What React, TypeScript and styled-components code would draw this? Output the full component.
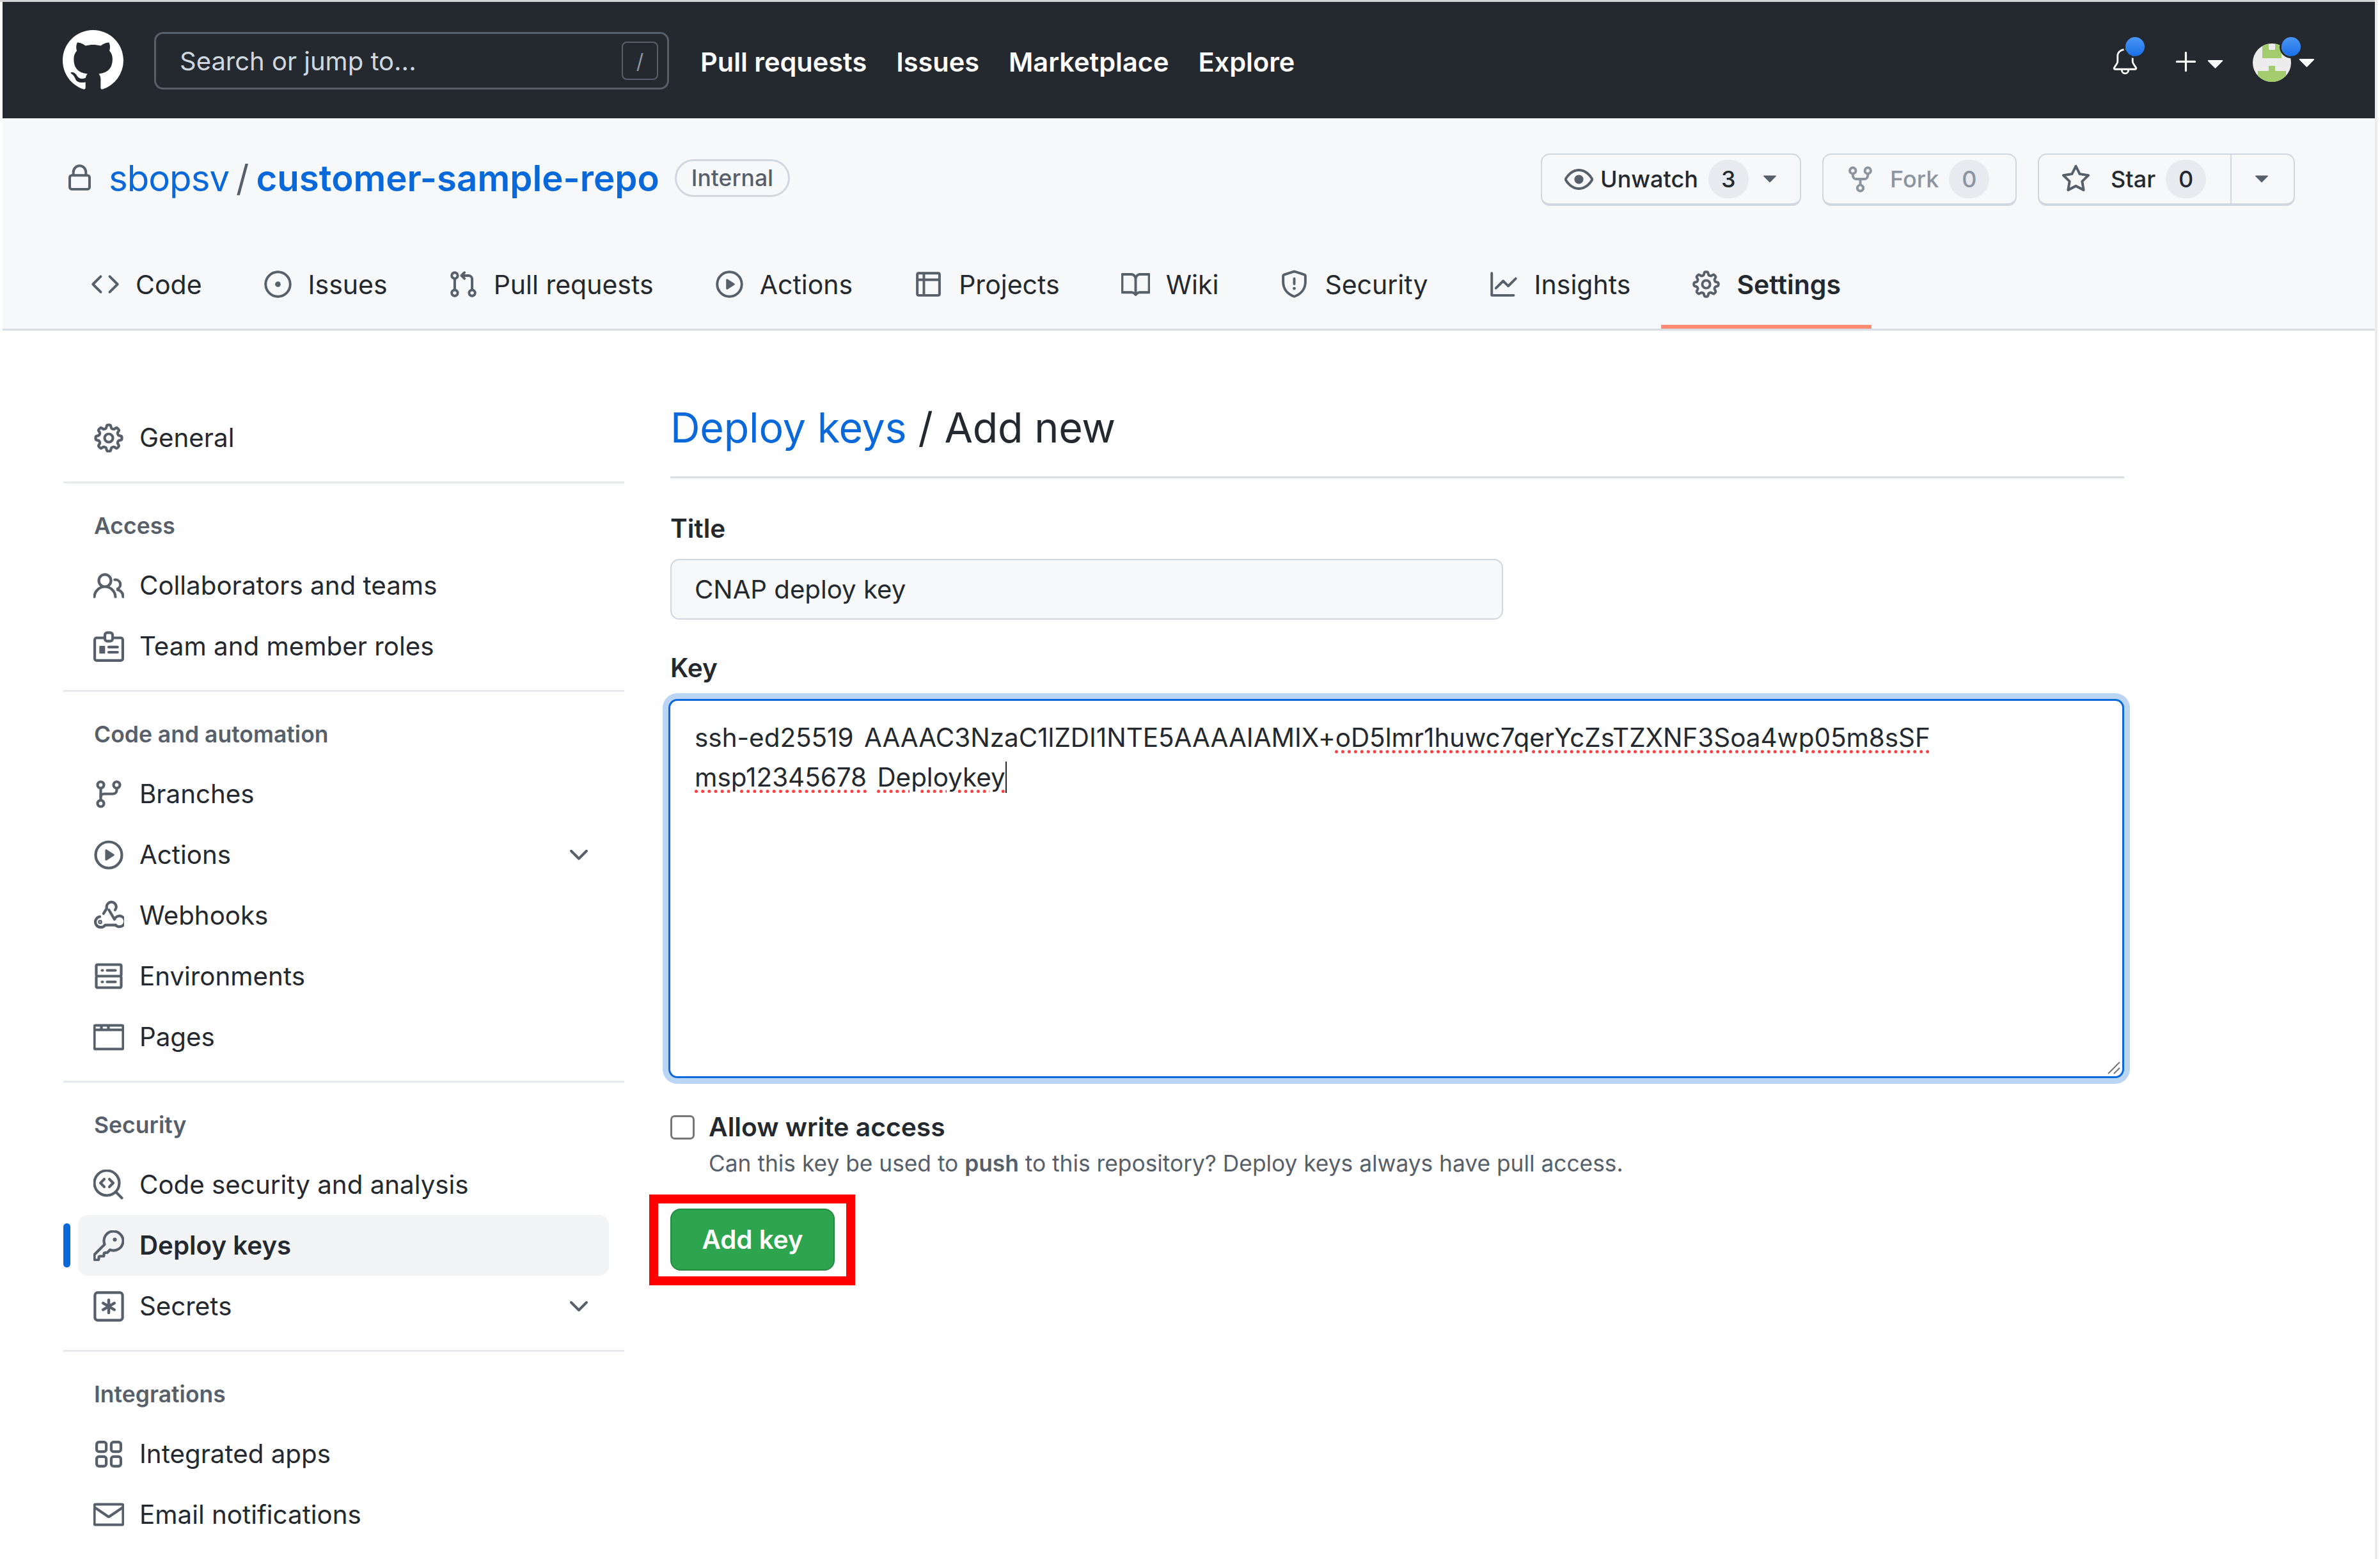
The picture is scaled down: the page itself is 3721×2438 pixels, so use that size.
import React from "react";
import styled, { createGlobalStyle, css } from "styled-components";
import {
  GoBell,
  GoBook,
  GoBrowser,
  GoChevronDown,
  GoCode,
  GoCodescan,
  GoEye,
  GoGear,
  GoGitBranch,
  GoGitPullRequest,
  GoGraph,
  GoIssueOpened,
  GoKey,
  GoLock,
  GoMail,
  GoPeople,
  GoPlay,
  GoPlus,
  GoRepoForked,
  GoServer,
  GoShield,
  GoStar,
  GoTable,
  GoTriangleDown,
} from "react-icons/go";

const GlobalStyle = createGlobalStyle`
  html, body {
    margin: 0;
    padding: 0;
    background: #fff;
    height: 2438px;
    overflow: hidden;
  }
  body {
    font-family: Inter, "Liberation Sans", sans-serif;
    color: #24292f;
  }
`;

// the package draws these on a 24 grid, a bit thin next to the reference
const heavyIcon = css`
  svg:not(.line) {
    stroke: currentColor;
    stroke-width: 0.6;
  }
`;

const Page = styled.div`
  width: 3717px;
  height: 2438px;
  box-sizing: border-box;
  margin-left: 0;
  padding: 3px 0 0 4px;
  border-right: 4px solid #ececec;
  position: relative;
  overflow: hidden;

  &::before {
    content: "";
    position: absolute;
    left: 0;
    right: 0;
    top: 0;
    height: 3px;
    background: #d4d4d4;
  }
`;

/* top bar */
const TopBar = styled.header`
  height: 182px;
  box-sizing: border-box;
  background: #24292f;
  display: flex;
  align-items: flex-start;
  padding: 44px 0 0 94px;
  color: #fff;
  position: relative;
`;

const Logo = styled.div`
  width: 95px;
  height: 95px;
  margin-right: 48px;
  color: #fff;
  display: flex;
`;

const Search = styled.div`
  width: 805px;
  height: 90px;
  box-sizing: border-box;
  margin-top: 3px;
  border: 3px solid #57606a;
  border-radius: 14px;
  display: flex;
  align-items: center;
  justify-content: space-between;
  padding: 0 14px 0 37px;
  font-size: 40px;
  color: #d0d7de;
  margin-right: 49px;
`;

const SlashKey = styled.span`
  width: 57px;
  height: 60px;
  box-sizing: border-box;
  border: 2px solid #57606a;
  border-radius: 8px;
  display: flex;
  align-items: center;
  justify-content: center;
  font-size: 32px;
  color: #8c959f;
`;

const TopNav = styled.nav`
  display: flex;
  gap: 46px;
  height: 100px;
  align-items: center;
  font-size: 41.5px;
  font-weight: 600;
  color: #fff;
`;

const TopRight = styled.div`
  position: absolute;
  top: 0;
  right: 0;
  left: 0;
  height: 100%;
  pointer-events: none;
`;

const TopIcon = styled.span<{ $x: number; $y: number; $size?: number }>`
  position: absolute;
  left: ${(p) => p.$x}px;
  top: ${(p) => p.$y}px;
  display: flex;
  color: #fff;
  font-size: ${(p) => p.$size ?? 45}px;
`;

const BlueDot = styled.span<{ $x: number }>`
  position: absolute;
  left: ${(p) => p.$x}px;
  top: 55px;
  width: 30px;
  height: 30px;
  border-radius: 50%;
  background: linear-gradient(#4a97f5, #1a6fe8);
  box-shadow: 0 0 0 3px #24292f;
`;

/* repo head */
const RepoHead = styled.div`
  height: 332px;
  background: #f6f8fa;
  border-bottom: 3px solid #d8dee4;
  box-sizing: border-box;
  display: flex;
  flex-direction: column;
`;

const RepoRow = styled.div`
  display: flex;
  align-items: center;
  justify-content: space-between;
  height: 82px;
  margin-top: 55px;
  padding: 0 125px 0 98px;
`;

const RepoTitle = styled.div`
  display: flex;
  align-items: center;
  font-size: 56.4px;
  color: #0969da;
  margin-top: -5px;
`;

const LockIcon = styled.span`
  ${heavyIcon}
  display: flex;
  color: #57606a;
  font-size: 45px;
  margin-right: 23px;
`;

const Owner = styled.span`
  letter-spacing: -1px;
`;

const Slash = styled.span`
  color: #57606a;
  margin: 0 11px;
`;

const RepoName = styled.span`
  font-weight: 600;
`;

const Badge = styled.span`
  margin-left: 24px;
  height: 59px;
  box-sizing: border-box;
  padding: 0 23px;
  display: flex;
  align-items: center;
  border: 3px solid #d0d7de;
  border-radius: 30px;
  font-size: 35.5px;
  font-weight: 500;
  color: #57606a;
`;

const Actions = styled.div`
  display: flex;
  gap: 33px;
`;

const ActionButton = styled.div<{ $w: number; $off?: boolean }>`
  width: ${(p) => p.$w}px;
  height: 82px;
  box-sizing: border-box;
  display: flex;
  align-items: center;
  background: #f6f8fa;
  border: 2px solid #d0d7de;
  border-bottom-width: 4px;
  border-radius: 14px;
  font-size: 36px;
  font-weight: 500;
  color: ${(p) => (p.$off ? "#8c959f" : "#24292f")};
  padding-left: 35px;
`;

const ActionIcon = styled.span<{ $gap: number; $off?: boolean }>`
  ${heavyIcon}
  display: flex;
  font-size: 45px;
  margin-right: ${(p) => p.$gap}px;
  color: ${(p) => (p.$off ? "#8c959f" : "#57606a")};
`;

const Counter = styled.span<{ $off?: boolean }>`
  width: 63px;
  height: 60px;
  margin-left: 16px;
  border-radius: 30px;
  background: #e7eaee;
  display: flex;
  align-items: center;
  justify-content: center;
  font-size: 36px;
  color: ${(p) => (p.$off ? "#8c959f" : "#24292f")};
`;

const ButtonCaret = styled.span`
  display: flex;
  color: #57606a;
  font-size: 38px;
  margin-left: 14px;
`;

const CaretCell = styled.span`
  align-self: stretch;
  margin-left: 38px;
  width: 94px;
  border-left: 2px solid #d0d7de;
  display: flex;
  align-items: center;
  justify-content: center;
  color: #57606a;
  font-size: 38px;
`;

const Tabs = styled.nav`
  display: flex;
  margin-top: 47px;
  padding-left: 90px;
  height: 142px;
  align-items: stretch;
`;

const Tab = styled.a<{ $active?: boolean }>`
  display: flex;
  align-items: center;
  gap: 25px;
  padding: 12px 48px 0;
  margin-bottom: -3px;
  font-size: 41px;
  font-weight: ${(p) => (p.$active ? 600 : 400)};
  color: #24292f;
  border-bottom: 6px solid ${(p) => (p.$active ? "#fd8c73" : "transparent")};
`;

const TabIcon = styled.span`
  ${heavyIcon}
  display: flex;
  color: #57606a;
  font-size: 45px;
`;

/* settings page */
const Body = styled.div`
  display: flex;
`;

const Sidebar = styled.aside`
  width: 877px;
  margin-left: 95px;
  padding-top: 120px;
`;

const SideGroup = styled.div`
  & + & {
    margin-top: 21px;
    padding-top: 0;
    border-top: 3px solid #e6eaef;
  }
`;

const SideHeading = styled.h3`
  margin: 0;
  padding: 45px 0 23px 48px;
  font-size: 35.5px;
  line-height: 44px;
  font-weight: 600;
  color: #57606a;
`;

const SideRow = styled.div<{ $active?: boolean }>`
  position: relative;
  height: 95px;
  margin: 0 24px 0 23px;
  padding: 0 24px 0 24px;
  box-sizing: border-box;
  display: flex;
  align-items: center;
  gap: 24px;
  border-radius: 15px;
  font-size: 40.3px;
  font-weight: ${(p) => (p.$active ? 600 : 400)};
  background: ${(p) => (p.$active ? "#f3f4f6" : "transparent")};

  ${(p) =>
    p.$active &&
    `
    &::before {
      content: "";
      position: absolute;
      left: -23px;
      top: 13px;
      bottom: 13px;
      width: 11px;
      border-radius: 6px;
      background: #0969da;
    }
  `}
`;

const SideIcon = styled.span`
  ${heavyIcon}
  display: flex;
  color: #57606a;
  font-size: 48px;
`;

const SideChevron = styled.span`
  ${heavyIcon}
  margin-left: auto;
  display: flex;
  color: #57606a;
  font-size: 46px;
`;

const Main = styled.main`
  width: 2273px;
  margin-left: 72px;
  padding-top: 112px;
`;

const Subhead = styled.h2`
  margin: 0;
  font-size: 64.5px;
  line-height: 80px;
  font-weight: 400;
  letter-spacing: -0.2px;
  padding-bottom: 36px;
  border-bottom: 3px solid #d8dee4;
`;

const SubheadLink = styled.span`
  color: #0969da;
`;

const FieldLabel = styled.label<{ $top: number }>`
  display: block;
  margin-top: ${(p) => p.$top}px;
  font-size: 40.5px;
  line-height: 44px;
  font-weight: 600;
`;

const TitleInput = styled.div`
  width: 1302px;
  height: 95px;
  margin-top: 25px;
  box-sizing: border-box;
  padding: 0 36px;
  display: flex;
  align-items: center;
  background: #f6f8fa;
  border: 2px solid #d0d7de;
  border-radius: 14px;
  font-size: 40.2px;
`;

const KeyArea = styled.div`
  position: relative;
  height: 593px;
  width: 2276px;
  margin: 26px 0 0 -3px;
  box-sizing: border-box;
  padding: 27px 38px;
  border: 3px solid #0969da;
  border-radius: 14px;
  box-shadow: 0 0 0 9px rgba(9, 105, 218, 0.28);
  background: #fff;
  font-size: 40.4px;
  word-spacing: 5px;
  line-height: 62px;
`;

const KeyLine = styled.div`
  white-space: nowrap;
`;

const Misspelled = styled.span`
  text-decoration: underline dotted #ff4040 5px;
  text-underline-offset: 5px;
`;

const Cursor = styled.span`
  border-right: 2px solid #24292f;
`;

const ResizeGrip = styled.svg`
  position: absolute;
  right: 2px;
  bottom: 2px;
  width: 24px;
  height: 24px;
`;

const CheckRow = styled.div`
  display: flex;
  gap: 22px;
  margin-top: 54px;
`;

const CheckBox = styled.span`
  width: 38px;
  height: 38px;
  margin-top: 4px;
  box-sizing: border-box;
  border: 3px solid #767676;
  border-radius: 7px;
  background: #fff;
`;

const CheckText = styled.div`
  display: flex;
  flex-direction: column;
`;

const CheckTitle = styled.span`
  font-size: 40.8px;
  line-height: 44px;
  font-weight: 600;
`;

const CheckHint = styled.span`
  margin-top: 14px;
  font-size: 35.3px;
  line-height: 44px;
  color: #57606a;

  b {
    font-weight: 600;
  }
`;

const Callout = styled.div`
  display: inline-flex;
  margin: 26px 0 0 -33px;
  padding: 8px 18px 9px 19px;
  border: 14px solid #ff0000;
`;

const AddButton = styled.div`
  width: 257px;
  height: 97px;
  box-sizing: border-box;
  display: flex;
  align-items: center;
  justify-content: center;
  background: #2da44e;
  border: 2px solid #278a43;
  border-radius: 16px;
  color: #fff;
  font-size: 40.3px;
  font-weight: 600;
`;

/* octicons missing from the icon package */
const Octo = () => (
  <svg width="95" height="95" viewBox="0 0 16 16" fill="currentColor">
    <path d="M8 0C3.58 0 0 3.58 0 8c0 3.54 2.29 6.53 5.47 7.59.4.07.55-.17.55-.38 0-.19-.01-.82-.01-1.49-2.01.37-2.53-.49-2.69-.94-.09-.23-.48-.94-.82-1.13-.28-.15-.68-.52-.01-.53.63-.01 1.08.58 1.23.82.72 1.21 1.87.87 2.33.66.07-.52.28-.87.51-1.07-1.78-.2-3.64-.89-3.64-3.95 0-.87.31-1.59.82-2.15-.08-.2-.36-1.02.08-2.12 0 0 .67-.21 2.2.82.64-.18 1.32-.27 2-.27.68 0 1.36.09 2 .27 1.53-1.04 2.2-.82 2.2-.82.44 1.1.16 1.92.08 2.12.51.56.82 1.27.82 2.15 0 3.07-1.87 3.75-3.65 3.95.29.25.54.73.54 1.48 0 1.07-.01 1.93-.01 2.2 0 .21.15.46.55.38A8.013 8.013 0 0016 8c0-4.42-3.58-8-8-8z" />
  </svg>
);

const Avatar = () => (
  <svg width="60" height="60" viewBox="0 0 60 60">
    <clipPath id="avatar-clip">
      <circle cx="30" cy="30" r="30" />
    </clipPath>
    <g clipPath="url(#avatar-clip)">
      <rect width="60" height="60" fill="#ececec" />
      <path d="M15 0h10v10h10V0h10v23H15zM25 35h10v8h17v17H8V43h17z" fill="#a3cc6e" />
    </g>
  </svg>
);

const Line = ({ children }: { children: React.ReactNode }) => (
  <svg className="line" width="1em" height="1em" viewBox="0 0 16 16" fill="none" stroke="currentColor" strokeWidth="1.4" strokeLinecap="round" strokeLinejoin="round">
    {children}
  </svg>
);

const AppsIcon = () => (
  <Line>
    <rect x="1.7" y="1.7" width="5" height="5" rx="1.2" />
    <rect x="9.3" y="1.7" width="5" height="5" rx="1.2" />
    <rect x="1.7" y="9.3" width="5" height="5" rx="1.2" />
    <rect x="9.3" y="9.3" width="5" height="5" rx="1.2" />
  </Line>
);

const BadgeIcon = () => (
  <Line>
    <path d="M5.5 3.5H1.7a1 1 0 0 0-1 1v9.8a1 1 0 0 0 1 1h12.6a1 1 0 0 0 1-1V4.500a1 1 0 0 0-1-1h-3.800" />
    <rect x="6" y="0.800" width="4" height="4.400" rx="1.200" />
    <path d="M3.400 8h2.400v3.400H3.400z" fill="currentColor" strokeWidth="0.600" />
    <path d="M8 8.300h4.600M8 11h4.600" />
  </Line>
);

const AsteriskIcon = () => (
  <Line>
    <rect x="0.800" y="0.800" width="14.400" height="14.400" rx="1.400" />
    <path d="M8 4.700v6.600M5.100 6.300l5.800 3.400M10.900 6.300l-5.800 3.400" strokeWidth="1.500" />
  </Line>
);

const WebhookIcon = () => (
  <Line>
    <path d="M5.300 6.900 7 4.100A2.500 2.500 0 1 1 11.300 5" />
    <path d="M3.300 8.500a2.800 2.800 0 1 0 2.800 4.400h5.500" />
    <path d="M8.100 5 11 9.900a2.800 2.800 0 1 1 .6 3" />
    <circle cx="3.500" cy="11.300" r=".4" />
  </Line>
);

const topLinks = ["Pull requests", "Issues", "Marketplace", "Explore"];

const tabs = [
  { label: "Code", icon: <GoCode /> },
  { label: "Issues", icon: <GoIssueOpened /> },
  { label: "Pull requests", icon: <GoGitPullRequest /> },
  { label: "Actions", icon: <GoPlay /> },
  { label: "Projects", icon: <GoTable /> },
  { label: "Wiki", icon: <GoBook /> },
  { label: "Security", icon: <GoShield /> },
  { label: "Insights", icon: <GoGraph /> },
  { label: "Settings", icon: <GoGear />, active: true },
];

type SideItem = { label: string; icon: React.ReactNode; active?: boolean; more?: boolean };

const sideGroups: { heading?: string; items: SideItem[] }[] = [
  { items: [{ label: "General", icon: <GoGear /> }] },
  {
    heading: "Access",
    items: [
      { label: "Collaborators and teams", icon: <GoPeople /> },
      { label: "Team and member roles", icon: <BadgeIcon /> },
    ],
  },
  {
    heading: "Code and automation",
    items: [
      { label: "Branches", icon: <GoGitBranch /> },
      { label: "Actions", icon: <GoPlay />, more: true },
      { label: "Webhooks", icon: <WebhookIcon /> },
      { label: "Environments", icon: <GoServer /> },
      { label: "Pages", icon: <GoBrowser /> },
    ],
  },
  {
    heading: "Security",
    items: [
      { label: "Code security and analysis", icon: <GoCodescan /> },
      { label: "Deploy keys", icon: <GoKey />, active: true },
      { label: "Secrets", icon: <AsteriskIcon />, more: true },
    ],
  },
  {
    heading: "Integrations",
    items: [
      { label: "Integrated apps", icon: <AppsIcon /> },
      { label: "Email notifications", icon: <GoMail /> },
    ],
  },
];

export default function App() {
  return (
    <Page>
      <GlobalStyle />
      <TopBar>
        <Logo>
          <Octo />
        </Logo>
        <Search>
          Search or jump to...
          <SlashKey>/</SlashKey>
        </Search>
        <TopNav>
          {topLinks.map((link) => (
            <span key={link}>{link}</span>
          ))}
        </TopNav>
        <TopRight>
          <TopIcon $x={3296} $y={71}>
            <GoBell />
          </TopIcon>
          <BlueDot $x={3319} />
          <TopIcon $x={3388} $y={68} $size={52}>
            <GoPlus />
          </TopIcon>
          <TopIcon $x={3437} $y={75} $size={45}>
            <GoTriangleDown />
          </TopIcon>
          <TopIcon $x={3518} $y={65} $size={60}>
            <Avatar />
          </TopIcon>
          <BlueDot $x={3563} />
          <TopIcon $x={3580} $y={73} $size={45}>
            <GoTriangleDown />
          </TopIcon>
        </TopRight>
      </TopBar>

      <RepoHead>
        <RepoRow>
          <RepoTitle>
            <LockIcon>
              <GoLock />
            </LockIcon>
            <Owner>sbopsv</Owner>
            <Slash>/</Slash>
            <RepoName>customer-sample-repo</RepoName>
            <Badge>Internal</Badge>
          </RepoTitle>
          <Actions>
            <ActionButton $w={407}>
              <ActionIcon $gap={11}>
                <GoEye />
              </ActionIcon>
              Unwatch
              <Counter>3</Counter>
              <ButtonCaret>
                <GoTriangleDown />
              </ButtonCaret>
            </ActionButton>
            <ActionButton $w={304} $off>
              <ActionIcon $gap={24} $off>
                <GoRepoForked />
              </ActionIcon>
              Fork
              <Counter $off>0</Counter>
            </ActionButton>
            <ActionButton $w={402}>
              <ActionIcon $gap={32}>
                <GoStar />
              </ActionIcon>
              Star
              <Counter>0</Counter>
              <CaretCell>
                <GoTriangleDown />
              </CaretCell>
            </ActionButton>
          </Actions>
        </RepoRow>
        <Tabs>
          {tabs.map((tab) => (
            <Tab key={tab.label} $active={tab.active}>
              <TabIcon>{tab.icon}</TabIcon>
              {tab.label}
            </Tab>
          ))}
        </Tabs>
      </RepoHead>

      <Body>
        <Sidebar>
          {sideGroups.map((group, i) => (
            <SideGroup key={i}>
              {group.heading && <SideHeading>{group.heading}</SideHeading>}
              {group.items.map((item) => (
                <SideRow key={item.label} $active={item.active}>
                  <SideIcon>{item.icon}</SideIcon>
                  {item.label}
                  {item.more && (
                    <SideChevron>
                      <GoChevronDown />
                    </SideChevron>
                  )}
                </SideRow>
              ))}
            </SideGroup>
          ))}
        </Sidebar>

        <Main>
          <Subhead>
            <SubheadLink>Deploy keys</SubheadLink> / Add new
          </Subhead>
          <FieldLabel $top={57}>Title</FieldLabel>
          <TitleInput>CNAP deploy key</TitleInput>
          <FieldLabel $top={54}>Key</FieldLabel>
          <KeyArea>
            <KeyLine>
              ssh-ed25519 AAAAC3NzaC1lZDI1NTE5AAAAIAMIX+
              <Misspelled>oD5lmr1huwc7qerYcZsTZXNF3Soa4wp05m8sSF</Misspelled>
            </KeyLine>
            <KeyLine>
              <Misspelled>msp12345678</Misspelled> <Misspelled>Deploykey</Misspelled>
              <Cursor />
            </KeyLine>
            <ResizeGrip viewBox="0 0 24 24">
              <path d="M4 22 22 4M13 22l9-9" stroke="#767676" strokeWidth="2" fill="none" />
            </ResizeGrip>
          </KeyArea>
          <CheckRow>
            <CheckBox />
            <CheckText>
              <CheckTitle>Allow write access</CheckTitle>
              <CheckHint>
                Can this key be used to <b>push</b> to this repository? Deploy keys always have pull access.
              </CheckHint>
            </CheckText>
          </CheckRow>
          <Callout>
            <AddButton>Add key</AddButton>
          </Callout>
        </Main>
      </Body>
    </Page>
  );
}
